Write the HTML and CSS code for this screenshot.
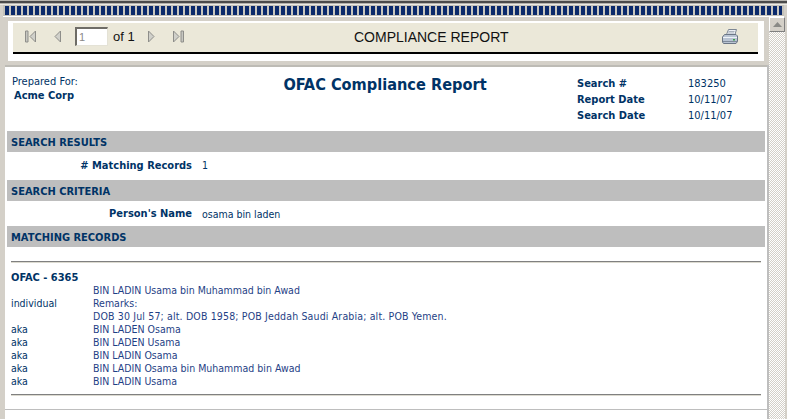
FILE: index.html
```html
<!DOCTYPE html>
<html lang="en">
<head>
<meta charset="utf-8">
<title>Compliance Report</title>
<link rel="stylesheet" href="styles.css">
</head>
<body>
<div class="topline"></div>
<div class="stripe"><div class="squares"></div></div>
<div class="frame">
  <div class="main">
    <div class="toolbar-wrap">
      <div class="toolbar">
        <div class="pager">
          <svg class="ic first" width="13" height="13" viewBox="0 0 13 13"><path d="M1.5 1h2.500v11H1.500z" fill="#c6c6c0" stroke="#8e8e8a"/><path d="M11.500 1 6 6.500l5.500 5.500z" fill="#d0d0ca" stroke="#8e8e8a"/></svg>
          <svg class="ic prev" width="8" height="13" viewBox="0 0 8 13"><path d="M6.500 1 1 6.500 6.500 12z" fill="#d0d0ca" stroke="#8e8e8a"/></svg>
          <span class="pagebox">1</span>
          <span class="of">of 1</span>
          <svg class="ic next" width="8" height="13" viewBox="0 0 8 13"><path d="M1.500 1 7 6.500 1.500 12z" fill="#d0d0ca" stroke="#8e8e8a"/></svg>
          <svg class="ic last" width="13" height="13" viewBox="0 0 13 13"><path d="M1.500 1 7 6.500 1.500 12z" fill="#d0d0ca" stroke="#8e8e8a"/><path d="M9 1h2.500v11H9z" fill="#c6c6c0" stroke="#8e8e8a"/></svg>
        </div>
        <div class="tb-title">COMPLIANCE REPORT</div>
        <svg class="printer" width="16" height="15" viewBox="0 0 16 15">
          <path d="M4.500 5.500 6.500.5h8l-1.500 5z" fill="#eef1f6" stroke="#7d8794"/>
          <path d="M6.500 2.500h6M6 4h6" stroke="#aab2bd"/>
          <path d="M2.500 5.500h11.500l1.500 1.500v5.500l-1.500 2H1.500l-1-1.500V8z" fill="#b9c4d3" stroke="#6b7685"/>
          <path d="M1 8.500h14" stroke="#eef2f7"/>
          <path d="M1 12.500h14" stroke="#7f8a9a"/>
          <path d="M11 10h2v1.500h-2z" fill="#3aa24a"/>
        </svg>
      </div>
    </div>
    <div class="panel">
      <div class="head">
        <div class="prepared">
          <div>Prepared For:</div>
          <div class="client">Acme Corp</div>
        </div>
        <h1 class="title">OFAC Compliance Report</h1>
        <dl class="meta">
          <dt>Search #</dt><dd>183250</dd>
          <dt>Report Date</dt><dd>10/11/07</dd>
          <dt>Search Date</dt><dd>10/11/07</dd>
        </dl>
      </div>
      <h2 class="bar">SEARCH RESULTS</h2>
      <div class="field"><span class="label"># Matching Records</span><span>1</span></div>
      <h2 class="bar">SEARCH CRITERIA</h2>
      <div class="field"><span class="label">Person's Name</span><span>osama bin laden</span></div>
      <h2 class="bar">MATCHING RECORDS</h2>
      <div class="records">
        <hr class="rule">
        <div class="rec-title">OFAC - 6365</div>
        <div class="rec-grid">
          <span></span><span>BIN LADIN Usama bin Muhammad bin Awad</span>
          <span>individual</span><span>Remarks:</span>
          <span></span><span class="remarks">DOB 30 Jul 57; alt. DOB 1958; POB Jeddah Saudi Arabia; alt. POB Yemen.</span>
          <span>aka</span><span>BIN LADEN Osama</span>
          <span>aka</span><span>BIN LADEN Usama</span>
          <span>aka</span><span>BIN LADIN Osama</span>
          <span>aka</span><span>BIN LADIN Osama bin Muhammad bin Awad</span>
          <span>aka</span><span>BIN LADIN Usama</span>
        </div>
        <hr class="rule bottom">
      </div>
      <div class="panel-end"></div>
    </div>
  </div>
  <div class="scrollbar">
    <div class="sb-btn"><svg width="9" height="5" viewBox="0 0 9 5"><path d="M4.500 0 9 5H0z" fill="#8a8a86"/></svg></div>
    <div class="sb-track"></div>
  </div>
</div>
</body>
</html>
```
FILE: styles.css
```css
* { box-sizing: border-box; }
html, body { margin: 0; height: 419px; overflow: hidden; }
body {
  background: #d4d0c8;
  font-family: "DejaVu Sans Condensed", "DejaVu Sans", sans-serif;
  font-size: 10.500px;
  color: #003366;
}
.topline {
  height: 5px;
  border-top: 1px solid #b8b6b0;
  background: linear-gradient(#4a4a4a 0 2px, #b5b3ad 2px 3px, #eceae4 3px);
}
.stripe {
  height: 12px;
  margin: 0 3px;
  padding: 1px 2px;
  background: #c4c2ba;
  border-bottom: 1px solid #fff;
}
.squares {
  height: 9px;
  background: repeating-linear-gradient(90deg, #0b2a6b 0 4px, #c8c6be 4px 6px);
}
.frame { display: flex; height: 402px; }
.main { width: 769px; padding: 4px 2px 0 5px; }
.toolbar-wrap {
  margin: 0 3px;
  width: 756px;
  height: 40px;
  background: #fff;
  padding: 2px 6px 0 5px;
}
.toolbar {
  height: 31px;
  background: #ebe8d9;
  border-bottom: 2px solid #000;
  padding-bottom: 2px;
  display: flex;
  align-items: center;
  font-family: "Liberation Sans", Arial, sans-serif;
  color: #111;
}
.pager { display: flex; align-items: center; width: 341px; }
.ic { flex: none; }
.first { margin-left: 11px; }
.prev { margin-left: 17px; }
.pagebox {
  margin-left: 13px;
  width: 33px;
  height: 19px;
  background: #fff;
  border: 1px solid #e4e2d6;
  border-top: 2px solid #6e6c66;
  border-left: 2px solid #6e6c66;
  color: #8a8a8a;
  font-size: 11px;
  line-height: 16px;
  padding-left: 2px;
}
.of { margin-left: 5px; font-size: 13px; width: 34px; }
.next { margin-left: 0; }
.last { margin-left: 17px; }
.tb-title { font-size: 14px; width: 368px; }
.printer { flex: none; }
.panel {
  margin-top: 4px;
  height: 354px;
  background: #fff;
  border-top: 2px solid #bdbbb5;
  position: relative;
}
.head {
  display: grid;
  grid-template-columns: 208px 330px 1fr;
  height: 64px;
  padding: 8px 0 0 7px;
}
.prepared { line-height: 14px; font-size: 11px; }
.client { font-weight: bold; margin-left: 2px; }
.title {
  margin: -1px 0 0;
  font-size: 16.200px;
  font-weight: bold;
  line-height: 22px;
  text-align: center;
}
.meta {
  margin: 1px 0 0;
  padding-left: 27px;
  font-size: 11px;
  display: grid;
  grid-template-columns: 111px 1fr;
  grid-auto-rows: 16px;
  line-height: 16px;
}
.meta dt { font-weight: bold; }
.meta dd { margin: 0; }
.bar {
  margin: 0 2px;
  height: 21px;
  background: #bebebe;
  font-size: 11px;
  font-weight: bold;
  line-height: 23px;
  padding-left: 4px;
}
.field {
  display: flex;
  height: 28px;
  align-items: center;
  gap: 10px;
  padding-bottom: 2px;
}
.field + .bar + .field { height: 25px; padding-bottom: 0; }
.label {
  width: 187px;
  text-align: right;
  font-size: 11px;
  font-weight: bold;
}
.records { padding: 14px 6px 0 6px; }
.rule {
  margin: 0;
  border: 0;
  height: 2px;
  background: linear-gradient(#808080 0 1px, #dcdad0 1px);
}
.rec-title { font-size: 11px; font-weight: bold; margin-top: 8px; line-height: 13px; }
.rec-grid {
  display: grid;
  grid-template-columns: 82px 1fr;
  grid-auto-rows: 13px;
  line-height: 13px;
}
.rec-grid span:nth-child(even) { color: #1f3f86; }
.rec-grid .remarks { letter-spacing: 0.150px; }
.bottom { margin-top: 6px; }
.panel-end {
  position: absolute;
  left: 0; right: 0;
  top: 342px;
  height: 1px;
  background: #bebebe;
}
.panel::after {
  content: "";
  position: absolute;
  right: -2px; top: -2px; bottom: 0;
  width: 2px;
  background: #bebebe;
}
.scrollbar { width: 16px; display: flex; flex-direction: column; margin-right: 2px; }
.sb-btn {
  height: 15px;
  background: #d4d0c8;
  border: 1px solid;
  border-color: #fff #808080 #808080 #fff;
  display: flex;
  align-items: center;
  justify-content: center;
}
.sb-track {
  flex: 1;
  background: repeating-conic-gradient(#fff 0 25%, #d4d0c8 0 50%) 0 0 / 2px 2px;
}
```
